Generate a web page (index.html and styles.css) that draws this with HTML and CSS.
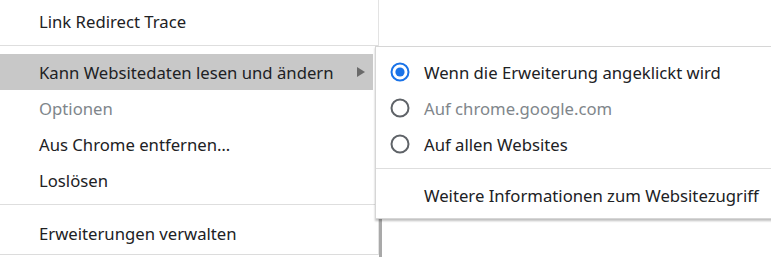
FILE: index.html
```html
<!DOCTYPE html>
<html lang="de">
<head>
<meta charset="utf-8">
<title>Extension menu</title>
<link rel="stylesheet" href="styles.css">
</head>
<body>
<div class="screen">
  <div class="menu">
    <div class="item">Link Redirect Trace</div>
    <div class="sep"></div>
    <div class="item active">
      <span>Kann Websitedaten lesen und ändern</span>
      <span class="arrow"></span>
    </div>
    <div class="item disabled">Optionen</div>
    <div class="item">Aus Chrome entfernen…</div>
    <div class="item">Loslösen</div>
    <div class="sep sep-wide"></div>
    <div class="item">Erweiterungen verwalten</div>
  </div>
  <div class="backdrop">
    <div class="backdrop-top"></div>
    <div class="backdrop-bottom"></div>
  </div>
  <div class="submenu">
    <div class="subitem">
      <svg class="radio" viewBox="0 0 20 20" width="20" height="20"><circle cx="10" cy="10" r="8.5" fill="none" stroke="#1a73e8" stroke-width="2"/><circle cx="10" cy="10" r="4.6" fill="#1a73e8"/></svg>
      <span>Wenn die Erweiterung angeklickt wird</span>
    </div>
    <div class="subitem disabled">
      <svg class="radio" viewBox="0 0 20 20" width="20" height="20"><circle cx="10" cy="10" r="8.5" fill="none" stroke="#5f6368" stroke-width="2"/></svg>
      <span>Auf chrome.google.com</span>
    </div>
    <div class="subitem">
      <svg class="radio" viewBox="0 0 20 20" width="20" height="20"><circle cx="10" cy="10" r="8.5" fill="none" stroke="#5f6368" stroke-width="2"/></svg>
      <span>Auf allen Websites</span>
    </div>
    <div class="subsep"></div>
    <div class="subitem plain">
      <span>Weitere Informationen zum Websitezugriff</span>
    </div>
  </div>
</div>
</body>
</html>
```
FILE: styles.css
```css
* { box-sizing: border-box; }
html, body {
  margin: 0;
  padding: 0;
  background: #ffffff;
}
body {
  font-family: "Noto Sans", "Open Sans", sans-serif;
  font-size: 16.7px;
  color: #202124;
  width: 771px;
  height: 257px;
  overflow: hidden;
}
.screen {
  position: relative;
  display: flex;
  height: 257px;
}
.menu {
  width: 379px;
  flex: none;
  padding-top: 3px;
  padding-bottom: 3px;
  border-right: 1px solid #e3e3e3;
  border-bottom: 1px solid #dcdcdc;
  align-self: flex-start;
  background: #fff;
}
.item {
  height: 36px;
  display: flex;
  align-items: center;
  padding-left: 39px;
  padding-right: 10px;
  white-space: nowrap;
}
.item.active {
  background: #c8c8c8;
  margin-right: 5px;
  justify-content: space-between;
  padding-right: 8px;
}
.item.disabled, .subitem.disabled {
  color: #80868b;
}
.arrow {
  width: 0;
  height: 0;
  border-top: 5px solid transparent;
  border-bottom: 5px solid transparent;
  border-left: 8px solid #6a6a6a;
}
.sep {
  height: 1px;
  background: #dedede;
  margin: 6px 0 8px;
}
.sep-wide {
  margin-bottom: 10px;
}
.backdrop {
  flex: 1;
  display: flex;
  flex-direction: column;
}
.backdrop-top {
  height: 218px;
}
.backdrop-bottom {
  flex: 1;
  border-left: 3px solid #a9a9a9;
  border-top: 1px solid #c4c4c4;
}
.submenu {
  position: absolute;
  left: 375px;
  top: 46px;
  width: 410px;
  height: 173px;
  background: #fff;
  border: 1px solid #d6d6d6;
  padding-top: 7px;
  box-shadow: 0 2px 2px rgba(0, 0, 0, 0.25);
}
.subitem {
  height: 36px;
  display: flex;
  align-items: center;
  padding-left: 14px;
  white-space: nowrap;
}
.subitem .radio {
  flex: none;
  margin-right: 14px;
}
.subitem.plain {
  padding-left: 48px;
}
.subsep {
  height: 1px;
  background: #dedede;
  margin: 6px 0 8px;
}
```
